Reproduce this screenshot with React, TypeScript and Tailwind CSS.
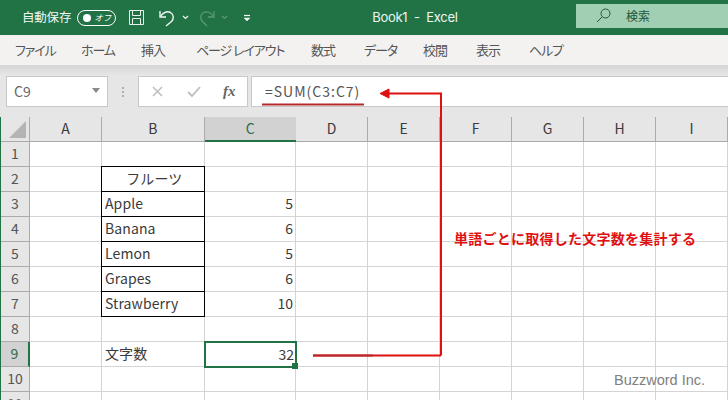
import React from "react";

const jp = "font-['Noto_Sans_CJK_JP','Noto_Sans',sans-serif]";

const tabs = [
    { label: "ファイル", width: "w-[38px]" },
    { label: "ホーム", width: "w-[32px]" },
    { label: "挿入", width: "w-[27px]" },
    { label: "ページ レイアウト", width: "w-[87px]" },
    { label: "数式", width: "w-[25px]" },
    { label: "データ", width: "w-[31px]" },
    { label: "校閲", width: "w-[25px]" },
    { label: "表示", width: "w-[25px]" },
    { label: "ヘルプ", width: "w-[32px]" },
];

const columns = ["A", "B", "C", "D", "E", "F", "G", "H", "I"];

interface RowData {
    readonly n: number;
    readonly b?: string;
    readonly c?: string;
    readonly boxed?: boolean;
    readonly center?: boolean;
}

const rows: RowData[] = [
    { n: 1 },
    { n: 2, b: "フルーツ", boxed: true, center: true },
    { n: 3, b: "Apple", c: "5", boxed: true },
    { n: 4, b: "Banana", c: "6", boxed: true },
    { n: 5, b: "Lemon", c: "5", boxed: true },
    { n: 6, b: "Grapes", c: "6", boxed: true },
    { n: 7, b: "Strawberry", c: "10", boxed: true },
    { n: 8 },
    { n: 9, b: "文字数", c: "32" },
    { n: 10 },
    { n: 11 },
];

function TitleBar() {
    return (
        <div className="h-[35px] bg-[#217346] flex items-center text-white shrink-0">
            <span className="ml-[22px] text-[12.5px] tracking-[-0.2px] text-[#f2f7f4]">自動保存</span>
            <div className="ml-[6px] w-[39px] h-[16px] rounded-full border border-white flex items-center justify-between pl-[5px] pr-[4px]">
                <span className="w-[8px] h-[8px] rounded-full bg-white" />
                <span className="text-[8.5px] italic leading-none">オフ</span>
            </div>
            <svg className="ml-[12px]" width="17" height="17" viewBox="0 0 17 17" fill="none" stroke="#e9f1ec" strokeWidth="1">
                <path d="M1.5 1.5h14v14h-14z" />
                <path d="M4.5 1.5v5h8v-5M4.5 15.5v-6h8v6" />
            </svg>
            <svg className="ml-[13px]" width="18" height="18" viewBox="0 0 18 18" fill="none" stroke="#f2f7f4" strokeWidth="1.4">
                <path d="M2 2v6h6" />
                <path d="M2.5 7.5C5 3 9.5 2 12.5 3.5c3.500 2 3.500 6.500 1 9L8 17" />
            </svg>
            <svg className="ml-[6px]" width="7" height="5" viewBox="0 0 7 5" fill="none" stroke="#f2f7f4" strokeWidth="1.2">
                <path d="M1 1l2.500 2.500L6 1" />
            </svg>
            <svg className="ml-[9px]" width="18" height="18" viewBox="0 0 18 18" fill="none" stroke="#5c9878" strokeWidth="1.300">
                <path d="M16 2v6h-6" />
                <path d="M15.500 7.500C13 3 8.500 2 5.500 3.500c-3.500 2-3.500 6.500-1 9L9 17" />
            </svg>
            <svg className="ml-[5px]" width="7" height="5" viewBox="0 0 7 5" fill="none" stroke="#5c9878" strokeWidth="1.2">
                <path d="M1 1l2.500 2.500L6 1" />
            </svg>
            <svg className="ml-[15px]" width="8" height="8" viewBox="0 0 8 8" fill="none" stroke="#f2f7f4">
                <path d="M1 1.500h6" strokeWidth="1.200" />
                <path d="M1 4l3 3 3-3z" fill="#f2f7f4" strokeWidth="0.500" />
            </svg>
            <span className="ml-[121px] text-[13px] font-['Inter',sans-serif] tracking-[-0.3px] text-[#eef5f1] whitespace-pre">Book1  -  Excel</span>
            <div className="ml-auto mb-[5px] mt-[1px] w-[152px] h-[24px] bg-[#a0cfb3] flex items-center text-[#24563b]">
                <svg className="ml-[20px]" width="15" height="15" viewBox="0 0 15 15" fill="none" stroke="#24563b" strokeWidth="1">
                    <circle cx="9.500" cy="5.500" r="4.500" />
                    <path d="M6 9l-5 5" />
                </svg>
                <span className="ml-[15px] text-[12px]">検索</span>
            </div>
        </div>
    );
}

function RibbonTabs() {
    return (
        <div className="h-[30px] bg-[#f3f2f1] flex items-center pl-[15px] gap-[28px] text-[13px] tracking-[-1.1px] [font-feature-settings:'palt'] text-[#555555] shrink-0">
            {tabs.map(t => (
                <span key={t.label} className={`${t.width} whitespace-pre`}>{t.label}</span>
            ))}
        </div>
    );
}

function FormulaBar() {
    return (
        <div className="h-[52px] bg-[#e6e6e6] bg-gradient-to-b from-[#d5d5d5] from-0% to-[#e6e6e6] to-20% flex items-start pt-[11px] pl-[6px] shrink-0">
            <div className="w-[102px] h-[31px] bg-white border border-[#c8c8c8] flex items-center pl-[7px] text-[14px] text-[#666666]">
                C9
                <svg className="ml-auto mr-[7px] mb-[3px]" width="8" height="5" viewBox="0 0 8 5">
                    <path d="M0 0h8L4 5z" fill="#8a8a8a" />
                </svg>
            </div>
            <div className="w-[30px] h-[31px] flex flex-col items-center justify-center gap-[2px]">
                {[0, 1, 2].map(i => <span key={i} className="w-[2px] h-[2px] bg-[#b0b0b0]" />)}
            </div>
            <div className="w-[110px] h-[31px] bg-white border border-[#c8c8c8] flex items-center text-[#b4b4b4]">
                <svg className="ml-[13px]" width="11" height="11" viewBox="0 0 11 11" fill="none" stroke="#bdbdbd" strokeWidth="1.500">
                    <path d="M1 1l9 9M10 1l-9 9" />
                </svg>
                <svg className="ml-[24px]" width="14" height="11" viewBox="0 0 14 11" fill="none" stroke="#bdbdbd" strokeWidth="1.800">
                    <path d="M1 6l4 4 8-9" />
                </svg>
                <span className="ml-[22px] text-[15px] italic font-bold text-[#666666] font-['Liberation_Serif',serif]">fx</span>
            </div>
            <div className="ml-[3px] flex-1 h-[31px] bg-white border border-r-0 border-[#c8c8c8] flex items-center pl-[13px] text-[14px] tracking-[1px] text-[#555555]">
                =SUM(C3:C7)
            </div>
        </div>
    );
}

function Sheet() {
    return (
        <div className="relative flex-1 overflow-hidden bg-white border-l-[1px] border-[#217346] text-[14px] text-[#3a3a3a]">
            <div className="grid grid-cols-[29px_72px_102.500px_91.500px_72px_72px_72px_72px_72px_72px] grid-rows-[25px_repeat(11,25px)]">
                <div className="bg-[#e6e6e6] border-r border-b border-[#ababab] relative">
                    <svg className="absolute right-[3px] bottom-[3px]" width="17" height="17" viewBox="0 0 17 17">
                        <path d="M17 0v17H0z" fill="#b4b4b4" />
                    </svg>
                </div>
                {columns.map(c => (
                    <div
                        key={c}
                        className={c === "C"
                            ? "bg-[#d2d2d2] border-b-2 border-[#217346] flex items-center justify-center pb-[1px] text-[#2f6b4a]"
                            : "bg-[#e6e6e6] border-r border-b border-[#ababab] flex items-center justify-center pb-[1px]"}
                    >
                        {c}
                    </div>
                ))}
                {rows.map(r => (
                    <React.Fragment key={r.n}>
                        <div className={r.n === 9
                            ? "bg-[#d2d2d2] border-r-2 border-b border-r-[#217346] border-b-[#ababab] flex items-center justify-center pb-[2px] text-[#2f6b4a]"
                            : "bg-[#e6e6e6] border-r border-b border-[#ababab] flex items-center justify-center pb-[2px] text-[#555555]"}
                        >
                            {r.n}
                        </div>
                        <div className="border-r border-b border-[#d4d4d4]" />
                        <div className={r.boxed
                            ? `border border-black -ml-px -mt-px pl-[3px] pb-[2px] flex items-center ${r.center ? "justify-center" : ""} tracking-[0.1px]`
                            : "border-r border-b border-[#d4d4d4] pl-[3px] pb-[2px] flex items-center tracking-[0.1px]"}
                        >
                            {r.b}
                        </div>
                        {r.n === 9 ? (
                            <div className="relative z-10 border-2 border-[#217346] -ml-px -mt-px -mr-px -mb-px flex items-center justify-end pr-[1px] pb-[1px]">
                                {r.c}
                                <span className="absolute -right-[3px] -bottom-[3px] w-[6px] h-[6px] bg-[#217346]" />
                            </div>
                        ) : (
                            <div className="border-r border-b border-[#d4d4d4] flex items-center justify-end pr-[2px] pb-[2px]">{r.c}</div>
                        )}
                        {columns.slice(3).map(c => (
                            <div key={c} className="border-r border-b border-[#d4d4d4]" />
                        ))}
                    </React.Fragment>
                ))}
            </div>
        </div>
    );
}

// red callouts drawn over the sheet
function Annotations() {
    return (
        <>
            <svg className="absolute left-0 top-0 pointer-events-none" width="728" height="400" viewBox="0 0 728 400" fill="none">
                <path d="M262 104.500h102" stroke="#b52a2f" strokeWidth="2" />
                <path d="M313 355.500h128M441 355.500V93.500H384" stroke="#e01010" strokeWidth="2" />
                <path d="M313 355.500h60" stroke="#b52a2f" strokeWidth="2" />
                <path d="M380 93.500l9-4.500v9z" fill="#e01010" stroke="#e01010" />
            </svg>
            <span className="absolute left-[454px] top-[228px] text-[14px] leading-[20px] font-bold text-[#e01010] tracking-[0.25px] whitespace-nowrap">単語ごとに取得した文字数を集計する</span>
            <span className="absolute left-[614px] top-[370px] text-[14.5px] leading-[20px] text-[#808080] font-['Liberation_Sans',sans-serif] font-medium">Buzzword Inc.</span>
        </>
    );
}

export default function App() {
    return (
        <div className={`relative w-[728px] h-[400px] overflow-hidden flex flex-col ${jp}`}>
            <TitleBar />
            <RibbonTabs />
            <FormulaBar />
            <Sheet />
            <Annotations />
        </div>
    );
}
